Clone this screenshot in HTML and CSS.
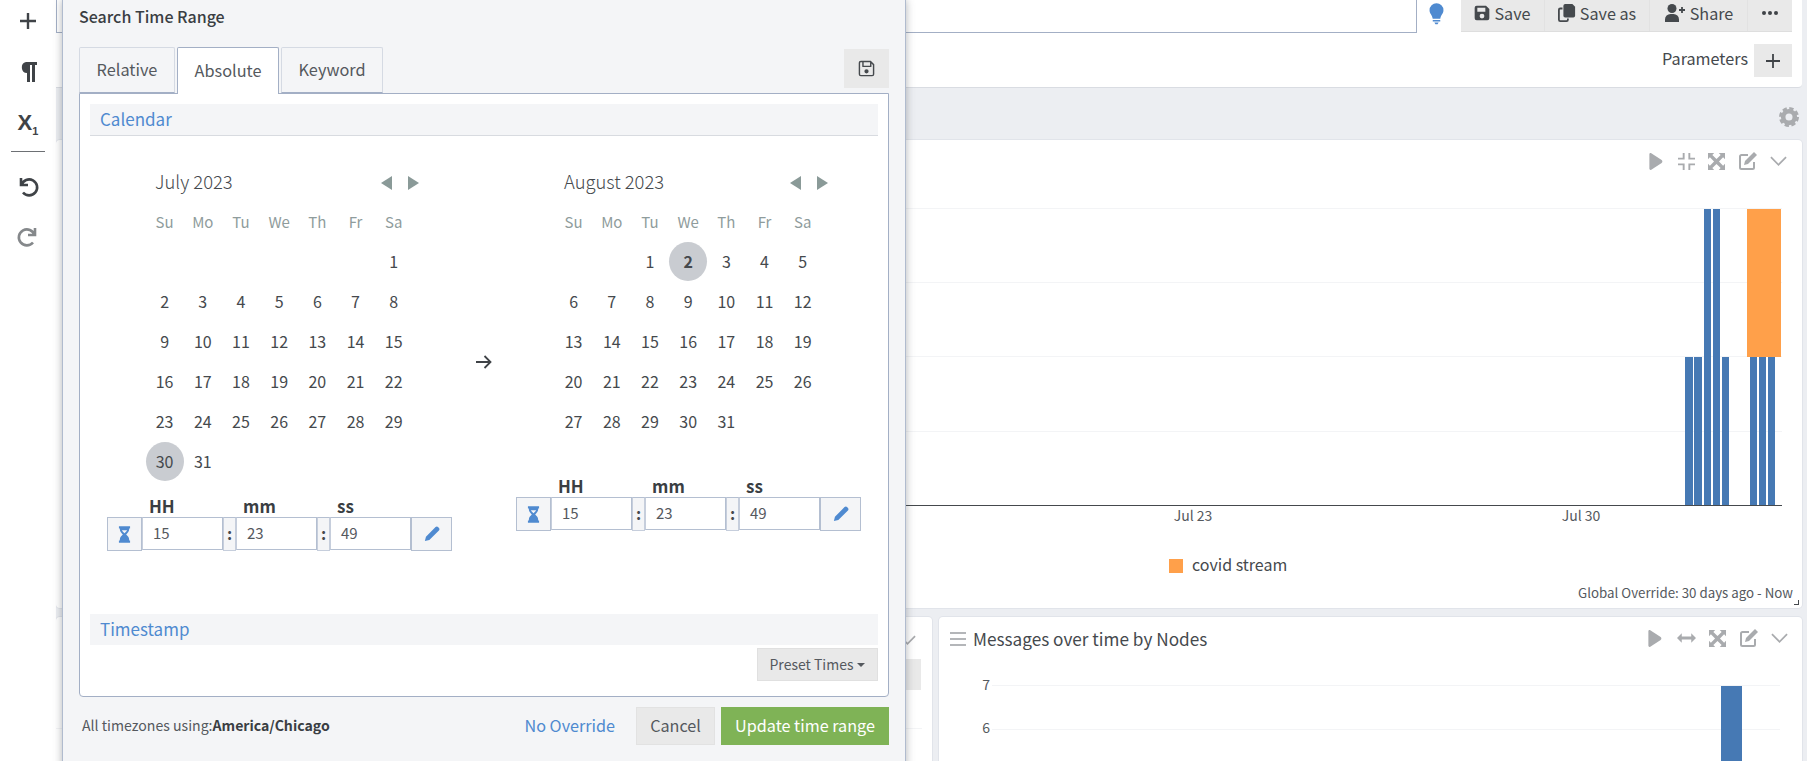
FILE: index.html
```html
<!DOCTYPE html>
<html lang="en">

<head>
    <meta charset="UTF-8">
    <title>Search Time Range</title>
    <link rel="stylesheet" href="styles.css">
</head>

<body>
    <svg class="defs" width="0" height="0">
        <symbol id="i-floppy" viewBox="0 0 24 24">
            <path fill-rule="evenodd" d="M4 1h14l5 5v14a3 3 0 0 1-3 3H4a3 3 0 0 1-3-3V4a3 3 0 0 1 3-3zM5 4v6h12V4zM12 13a3.6 3.6 0 1 0 0 7.200a3.600 3.600 0 0 0 0-7.200z" />
        </symbol>
        <symbol id="i-play" viewBox="0 0 14 18">
            <path d="M0 1.500C0 .3 1 -.3 2 .3l11 7.200c1 .7 1 2.300 0 3L2 17.700c-1 .6-2 0-2-1.200z" />
        </symbol>
        <symbol id="i-expand" viewBox="0 0 18 18">
            <path d="M0 0h6.500L4.600 2 9 6.400 13.400 2l-2-2H18v6.500l-2-1.900L11.600 9l4.400 4.400 2-2V18h-6.600l2-2L9 11.600 4.600 16l1.900 2H0v-6.600l2 2L6.400 9 2 4.600 0 6.500z" />
        </symbol>
        <symbol id="i-edit" viewBox="0 0 20 20">
            <path d="M10 4H3.500A1.500 1.500 0 0 0 2 5.500v11A1.500 1.500 0 0 0 3.500 18h11a1.500 1.500 0 0 0 1.500-1.500V11" fill="none" stroke="currentColor" stroke-width="2" />
            <path d="M16 1l3 3-9 9-4 1 1-4z" />
        </symbol>
        <symbol id="i-chevron" viewBox="0 0 18 10">
            <path d="M1 1l8 8 8-8" fill="none" stroke="currentColor" stroke-width="1.800" />
        </symbol>
        <symbol id="i-hourglass" viewBox="0 0 14 18">
            <path fill-rule="evenodd" d="M1 0h12v2.500h-1v1.500c0 2-2 3.800-3.200 5C10 10.200 12 12 12 14v1.500h1V18H1v-2.500h1V14c0-2 2-3.800 3.200-5C4 7.800 2 6 2 4V2.500H1zM4.200 4.500c.4 1 1.800 2.300 2.800 3.200 1-.9 2.400-2.200 2.800-3.200z" />
        </symbol>
        <symbol id="i-pencil" viewBox="0 0 18 18">
            <path d="M13 1.200c.8-.8 2-.8 2.800 0l1 1c.8.800.8 2 0 2.800L6 15.800 1 17l1.200-5z" />
        </symbol>
    </svg>

    <div class="toolbar">
        <svg class="tool-icon tool-plus" viewBox="0 0 24 24"><path d="M12 4v16M4 12h16" fill="none" stroke="#3f4347" stroke-width="2.400" /></svg>
        <svg class="tool-para" viewBox="0 0 18 20"><path d="M7 0h11v3h-2v17h-3V3h-2v17H8v-9A5.600 5.600 0 0 1 7 0z" fill="#3f4347" /></svg>
        <b class="tool-sub">X<sub>1</sub></b>
        <div class="tool-line"></div>
        <svg class="tool-icon" viewBox="0 0 24 24"><path d="M5 4v7h7M5.500 11A8 8 0 1 1 7 18.500" fill="none" stroke="#3f4347" stroke-width="2.600" /></svg>
        <svg class="tool-icon tool-off" viewBox="0 0 24 24"><path d="M19 4v7h-7M18.500 11A8 8 0 1 0 17 18.500" fill="none" stroke="#85888b" stroke-width="2.600" /></svg>
    </div>

    <div class="main">
        <div class="top-card">
            <div class="top-row">
                <div class="query"></div>
                <svg class="bulb" viewBox="0 0 14 20"><path d="M7 0a6.500 6.500 0 0 1 6.500 6.500c0 3-2.500 4.500-3 8h-7c-.5-3.500-3-5-3-8A6.500 6.500 0 0 1 7 0zM3.500 15.500h7v1.500h-7zM5 18h4l-1 1.500H6z" fill="#4f8ad0" /></svg>
                <div class="btn-group">
                    <span class="top-btn save-btn"><svg class="btn-icon"><use href="#i-floppy" /></svg>Save</span>
                    <span class="top-btn saveas-btn">
                        <svg class="btn-icon btn-icon-big" viewBox="0 0 20 20"><path d="M8 0h8l3 3v10a2 2 0 0 1-2 2H8a2 2 0 0 1-2-2V2a2 2 0 0 1 2-2z" fill="#45494d" /><path d="M5 5H2.500A1.500 1.500 0 0 0 1 6.500v11A1.500 1.500 0 0 0 2.500 19h7a1.500 1.500 0 0 0 1.500-1.500V16" fill="none" stroke="#45494d" stroke-width="2" /></svg>Save as
                    </span>
                    <span class="top-btn share-btn">
                        <svg class="share-icon" viewBox="0 0 22 18"><circle cx="8" cy="4.500" r="4.500" fill="#45494d" /><path d="M1 18v-2.500A5.500 5.500 0 0 1 6.500 10h3a5.500 5.500 0 0 1 5.500 5.500V18z" fill="#45494d" /><path d="M18 3v6M15 6h6" stroke="#45494d" stroke-width="1.800" /></svg>Share
                    </span>
                    <span class="top-btn dots-btn"><i></i><i></i><i></i></span>
                </div>
            </div>
            <div class="param-row">
                <span class="param-label">Parameters</span>
                <span class="param-add"><svg viewBox="0 0 14 14"><path d="M7 0v14M0 7h14" stroke="#3f4347" stroke-width="1.800" /></svg></span>
            </div>
        </div>

        <div class="band">
            <svg class="gear" viewBox="0 0 24 24">
                <circle cx="12" cy="12" r="7" fill="none" stroke="#a9abae" stroke-width="5.500" />
                <circle cx="12" cy="12" r="10.500" fill="none" stroke="#a9abae" stroke-width="3" stroke-dasharray="5.200 3.050" />
            </svg>
        </div>

        <div class="chart-card">
            <div class="card-icons">
                <svg class="ci-play"><use href="#i-play" /></svg>
                <svg class="ci-square" viewBox="0 0 18 18"><path d="M6 0v6H0M12 0v6h6M6 18v-6H0M12 18v-6h6" fill="none" stroke="currentColor" stroke-width="2" /></svg>
                <svg class="ci-square"><use href="#i-expand" /></svg>
                <svg class="ci-edit"><use href="#i-edit" /></svg>
                <svg class="ci-chev"><use href="#i-chevron" /></svg>
            </div>
            <svg class="chart-main" viewBox="56 140 1747 440">
                <g class="grid">
                    <rect x="906" y="208" width="876" height="1" />
                    <rect x="906" y="282" width="876" height="1" />
                    <rect x="906" y="356" width="876" height="1" />
                    <rect x="906" y="431" width="876" height="1" />
                </g>
                <g class="bars">
                    <rect x="1685" y="357" width="8" height="148" />
                    <rect x="1694" y="357" width="8" height="148" />
                    <rect x="1704" y="209" width="7" height="296" />
                    <rect x="1713" y="209" width="7" height="296" />
                    <rect x="1722" y="357" width="7" height="148" />
                    <rect x="1750" y="357" width="7" height="148" />
                    <rect x="1759" y="357" width="7" height="148" />
                    <rect x="1768" y="357" width="7" height="148" />
                </g>
                <rect class="bar-orange" x="1747" y="209" width="34" height="148" />
                <rect class="axis" x="906" y="505" width="876" height="1" />
                <text class="tick" x="1193" y="521" text-anchor="middle">Jul 23</text>
                <text class="tick" x="1581" y="521" text-anchor="middle">Jul 30</text>
                <rect class="bar-orange" x="1169" y="559" width="14" height="14" />
                <text class="legend" x="1192" y="571">covid stream</text>
            </svg>
            <div class="override">Global Override: 30 days ago - Now</div>
            <span class="resize"></span>
        </div>

        <div class="bottom-row">
            <div class="sub-card left-card">
                <svg class="left-chev"><use href="#i-chevron" /></svg>
                <div class="left-btn"></div>
                <div class="left-line"></div>
            </div>
            <div class="sub-card nodes-card">
                <div class="nodes-head">
                    <span class="drag"><i></i><i></i><i></i></span>
                    <span class="nodes-title">Messages over time by Nodes</span>
                    <div class="card-icons nodes-icons">
                        <svg class="ci-play"><use href="#i-play" /></svg>
                        <svg class="ci-wide" viewBox="0 0 20 12"><path d="M0 6l5-5v3.500h10V1l5 5-5 5V7.500H5V11z" /></svg>
                        <svg class="ci-square"><use href="#i-expand" /></svg>
                        <svg class="ci-edit"><use href="#i-edit" /></svg>
                        <svg class="ci-chev"><use href="#i-chevron" /></svg>
                    </div>
                </div>
                <svg class="chart-nodes" viewBox="939 660 863 101">
                    <rect class="grid-line" x="992" y="685" width="788" height="1" />
                    <rect class="grid-line" x="992" y="729" width="788" height="1" />
                    <rect class="bar-blue" x="1721" y="686" width="21" height="75" />
                    <text class="tick" x="990" y="690" text-anchor="end">7</text>
                    <text class="tick" x="990" y="733" text-anchor="end">6</text>
                </svg>
            </div>
        </div>
    </div>

    <div class="modal">
        <div class="modal-title">Search Time Range</div>
        <div class="tabs">
            <span class="tab">Relative</span>
            <span class="tab tab-on">Absolute</span>
            <span class="tab">Keyword</span>
            <span class="tab-save"><svg viewBox="0 0 24 24"><path fill-rule="evenodd" d="M4 1h14l5 5v14a3 3 0 0 1-3 3H4a3 3 0 0 1-3-3V4a3 3 0 0 1 3-3zM4 3a1 1 0 0 0-1 1v16a1 1 0 0 0 1 1h16a1 1 0 0 0 1-1V7l-2-2v4a1 1 0 0 1-1 1H7a1 1 0 0 1-1-1V3zM8 3v5h9V3zM12 13a3 3 0 1 0 0 6 3 3 0 0 0 0-6z" fill="#45494d" /></svg></span>
        </div>

        <div class="panel">
            <div class="sec-head sec-line">Calendar</div>
            <div class="calendars">
                <div class="cal-col">
                    <div class="cal-title"><span class="cal-name">July 2023</span><span class="cal-arrows"><i class="arrow-l"></i><i class="arrow-r"></i></span></div>
                    <div class="cal-grid">
                        <span class="wd">Su</span><span class="wd">Mo</span><span class="wd">Tu</span><span class="wd">We</span><span class="wd">Th</span><span class="wd">Fr</span><span class="wd">Sa</span>
                        <span></span><span></span><span></span><span></span><span></span><span></span><span>1</span>
                        <span>2</span><span>3</span><span>4</span><span>5</span><span>6</span><span>7</span><span>8</span>
                        <span>9</span><span>10</span><span>11</span><span>12</span><span>13</span><span>14</span><span>15</span>
                        <span>16</span><span>17</span><span>18</span><span>19</span><span>20</span><span>21</span><span>22</span>
                        <span>23</span><span>24</span><span>25</span><span>26</span><span>27</span><span>28</span><span>29</span>
                        <span><em class="picked">30</em></span><span>31</span><span></span><span></span><span></span><span></span><span></span>
                    </div>
                    <div class="time-labels"><span>HH</span><span>mm</span><span>ss</span></div>
                    <div class="time-row">
                        <span class="addon addon-l"><svg><use href="#i-hourglass" /></svg></span>
                        <span class="time-input">15</span><span class="colon">:</span>
                        <span class="time-input">23</span><span class="colon">:</span>
                        <span class="time-input">49</span>
                        <span class="addon addon-r"><svg><use href="#i-pencil" /></svg></span>
                    </div>
                </div>
                <div class="cal-to">
                    <svg viewBox="0 0 16 14"><path d="M0 7h14M8.500 1l6 6-6 6" fill="none" stroke="#3f4347" stroke-width="1.800" /></svg>
                </div>
                <div class="cal-col">
                    <div class="cal-title"><span class="cal-name">August 2023</span><span class="cal-arrows"><i class="arrow-l"></i><i class="arrow-r"></i></span></div>
                    <div class="cal-grid">
                        <span class="wd">Su</span><span class="wd">Mo</span><span class="wd">Tu</span><span class="wd">We</span><span class="wd">Th</span><span class="wd">Fr</span><span class="wd">Sa</span>
                        <span></span><span></span><span>1</span><span><em class="picked picked-bold">2</em></span><span>3</span><span>4</span><span>5</span>
                        <span>6</span><span>7</span><span>8</span><span>9</span><span>10</span><span>11</span><span>12</span>
                        <span>13</span><span>14</span><span>15</span><span>16</span><span>17</span><span>18</span><span>19</span>
                        <span>20</span><span>21</span><span>22</span><span>23</span><span>24</span><span>25</span><span>26</span>
                        <span>27</span><span>28</span><span>29</span><span>30</span><span>31</span><span></span><span></span>
                    </div>
                    <div class="time-labels time-labels-short"><span>HH</span><span>mm</span><span>ss</span></div>
                    <div class="time-row">
                        <span class="addon addon-l"><svg><use href="#i-hourglass" /></svg></span>
                        <span class="time-input">15</span><span class="colon">:</span>
                        <span class="time-input">23</span><span class="colon">:</span>
                        <span class="time-input">49</span>
                        <span class="addon addon-r"><svg><use href="#i-pencil" /></svg></span>
                    </div>
                </div>
            </div>
            <div class="sec-head">Timestamp</div>
            <div class="preset-row">
                <span class="preset">Preset Times<i class="caret"></i></span>
            </div>
        </div>

        <div class="modal-foot">
            <span class="tz">All timezones using:<b>America/Chicago</b></span>
            <span class="no-override">No Override</span>
            <span class="foot-btn">Cancel</span>
            <span class="foot-btn foot-go">Update time range</span>
        </div>
    </div>
</body>

</html>
```
FILE: styles.css
```css
html,
body {
    margin: 0;
    padding: 0;
    height: 761px;
    overflow: hidden;
}

body {
    display: flex;
    position: relative;
    background: #eceef2;
    font-family: "Noto Sans CJK SC", "Liberation Sans", sans-serif;
    font-size: 16px;
    color: #45494d;
}

.defs {
    position: absolute;
}

/* left toolbar */
.toolbar {
    width: 56px;
    flex: none;
    background: #fff;
    display: flex;
    flex-direction: column;
    align-items: center;
    padding-top: 9px;
    box-sizing: border-box;
}

.tool-icon {
    width: 24px;
    height: 24px;
    margin-bottom: 26px;
}

.tool-plus {
    margin-bottom: 29px;
}

.tool-para {
    width: 18px;
    height: 20px;
    margin-bottom: 27px;
}

.tool-sub {
    font-family: "Liberation Sans", sans-serif;
    font-size: 22px;
    line-height: 28px;
    height: 28px;
    color: #3f4347;
}

.tool-sub sub {
    font-size: 11px;
    line-height: 0;
}

.tool-line {
    width: 34px;
    height: 1px;
    background: #6d7074;
    margin: 14px 0 22px;
}

.tool-icon:last-child {
    margin-bottom: 0;
}

/* page behind the dialog */
.main {
    flex: 1;
    min-width: 0;
    height: 761px;
    overflow: hidden;
    padding-right: 5px;
}

.top-card {
    height: 87px;
    background: #fff;
    border-bottom: 1px solid #d9dce2;
    border-radius: 0 0 4px 0;
    box-sizing: content-box;
}

.top-row {
    display: flex;
    height: 33px;
}

.query {
    flex: 1;
    border: 1px solid #a3afc5;
    border-top: 0;
}

.bulb {
    width: 15px;
    height: 22px;
    margin: 3px 17px 0 12px;
}

.btn-group {
    display: flex;
    align-self: flex-start;
    margin-right: 10px;
    background: #e9e9e9;
    border-bottom: 1px solid #dedede;
}

.top-btn {
    display: flex;
    align-items: center;
    justify-content: center;
    font-size: 16.200px;
    border-right: 1px solid #e2e2e2;
    box-sizing: border-box;
    height: 31px;
    padding-bottom: 5px;
    gap: 4px;
}

.top-btn:last-child {
    border-right: 0;
}

.save-btn {
    width: 84px;
}

.saveas-btn {
    width: 105px;
}

.share-btn {
    width: 98px;
}

.dots-btn {
    width: 44px;
    gap: 2px;
}

.dots-btn i {
    width: 4px;
    height: 4px;
    border-radius: 50%;
    background: #3f4347;
}

.btn-icon {
    width: 16px;
    height: 16px;
    fill: #45494d;
}

.btn-icon-big {
    width: 18px;
    height: 18px;
}

.share-icon {
    width: 22px;
    height: 18px;
}

.param-row {
    display: flex;
    justify-content: flex-end;
    align-items: center;
    gap: 6px;
    padding: 11px 10px 0 0;
}

.param-label {
    font-size: 16.200px;
    padding-bottom: 6px;
}

.param-add {
    width: 38px;
    height: 33px;
    background: #e9e9e9;
    display: flex;
    align-items: center;
    justify-content: center;
}

.param-add svg {
    width: 14px;
    height: 14px;
}

.band {
    height: 52px;
    display: flex;
    justify-content: flex-end;
    align-items: flex-start;
}

.gear {
    width: 20px;
    height: 20px;
    margin: 19px 3px 0 0;
}

.chart-card {
    position: relative;
    height: 468px;
    box-sizing: border-box;
    background: #fff;
    border-radius: 4px;
    box-shadow: 0 0 0 1px #e1e4ea;
    margin-bottom: 9px;
}

.card-icons {
    display: flex;
    align-items: center;
    justify-content: flex-end;
    color: #a9abae;
    fill: #a9abae;
    position: absolute;
    top: 11px;
    right: 15px;
    height: 20px;
}

.ci-play {
    width: 14px;
    height: 17px;
    margin-right: 15px;
}

.ci-square {
    width: 17px;
    height: 17px;
    margin-right: 13px;
}

.ci-wide {
    width: 19px;
    height: 12px;
    margin-right: 13px;
}

.ci-edit {
    width: 20px;
    height: 20px;
    margin-right: 12px;
}

.ci-chev {
    width: 17px;
    height: 10px;
}

.chart-main {
    display: block;
    width: 1747px;
    height: 440px;
}

.grid rect,
.grid-line {
    fill: #f3f4f6;
}

.bars rect,
.bar-blue {
    fill: #4679b4;
}

.bar-orange {
    fill: #ffa04a;
}

.axis {
    fill: #45494d;
}

.tick {
    font-size: 14px;
    fill: #55595e;
}

.legend {
    font-size: 16px;
    fill: #45494d;
}

.override {
    position: absolute;
    right: 9px;
    bottom: 6px;
    font-size: 13.300px;
    color: #55595e;
    line-height: 18px;
}

.resize {
    position: absolute;
    right: 3px;
    bottom: 3px;
    width: 4px;
    height: 4px;
    border-right: 1px solid #45494d;
    border-bottom: 1px solid #45494d;
}

.bottom-row {
    display: flex;
    gap: 7px;
}

.sub-card {
    background: #fff;
    border-radius: 4px 4px 0 0;
    box-shadow: 0 0 0 1px #e1e4ea;
    height: 144px;
    position: relative;
}

.left-card {
    width: 876px;
    flex: none;
}

.left-chev {
    position: absolute;
    right: 16px;
    top: 18px;
    width: 17px;
    height: 10px;
    color: #a9abae;
}

.left-btn {
    position: absolute;
    right: 11px;
    top: 42px;
    width: 40px;
    height: 31px;
    background: #e9e9e9;
}

.left-line {
    position: absolute;
    right: 10px;
    left: 0;
    top: 111px;
    height: 1px;
    background: #f3f4f6;
}

.nodes-card {
    flex: 1;
}

.nodes-head {
    display: flex;
    align-items: center;
    height: 43px;
    padding-left: 11px;
}

.drag {
    display: flex;
    flex-direction: column;
    gap: 4px;
    width: 16px;
    margin-right: 7px;
}

.drag i {
    height: 2px;
    background: #b4b6b9;
}

.nodes-title {
    font-size: 17.200px;
}

.nodes-icons {
    top: 11px;
    right: 14px;
}

.chart-nodes {
    position: absolute;
    left: 0;
    top: 43px;
    width: 863px;
    height: 101px;
}

/* search time range dialog */
.modal {
    position: absolute;
    left: 62px;
    top: 0;
    width: 844px;
    height: 780px;
    box-sizing: border-box;
    padding: 0 16px;
    background: #f4f5f7;
    border-left: 1px solid #b0bbce;
    border-right: 1px solid #b0bbce;
    box-shadow: 0 0 8px rgba(70, 74, 82, .42);
}

.modal-title {
    font-size: 16px;
    font-weight: 500;
    line-height: 24px;
    padding-top: 4px;
    margin-bottom: 19px;
    color: #3a3e43;
}

.tabs {
    display: flex;
    gap: 2px;
    height: 46px;
    align-items: flex-start;
}

.tab {
    width: 96px;
    height: 46px;
    box-sizing: border-box;
    border: 1px solid #d5dae3;
    border-bottom: 1px solid #a3afc5;
    border-radius: 2px 2px 0 0;
    display: flex;
    align-items: center;
    justify-content: center;
    font-size: 16.300px;
    padding-bottom: 2px;
    color: #55595e;
}

.tab-on {
    width: 102px;
    height: 47px;
    position: relative;
    z-index: 1;
    background: #fff;
    border-color: #a3afc5;
    border-bottom: 0;
    padding-bottom: 3px;
}

.tab:nth-child(3) {
    width: 102px;
}

.tab-save {
    margin: 2px 0 0 auto;
    width: 45px;
    height: 39px;
    background: #e9e9e9;
    display: flex;
    align-items: center;
    justify-content: center;
}

.tab-save svg {
    width: 17px;
    height: 17px;
}

.panel {
    height: 604px;
    box-sizing: border-box;
    background: #fff;
    border: 1px solid #a3afc5;
    border-radius: 0 0 4px 4px;
    padding: 10px 10px 0;
}

.sec-head {
    height: 31px;
    line-height: 29px;
    background: #f4f5f7;
    padding-left: 10px;
    font-size: 17px;
    color: #4f8ad0;
}

.sec-line {
    height: 32px;
    box-sizing: border-box;
    border-bottom: 1px solid #d8dbe0;
}

.calendars {
    display: flex;
    align-items: flex-start;
    padding-left: 17px;
    height: 478px;
    box-sizing: border-box;
}

.cal-col {
    width: 345px;
    flex: none;
    padding-top: 32px;
}

.cal-title {
    display: flex;
    justify-content: space-between;
    align-items: center;
    height: 30px;
    margin-bottom: 3px;
    padding: 0 33px 0 48px;
    color: #45494d;
}

.cal-name {
    font-size: 18.400px;
    font-weight: 300;
    padding-bottom: 4px;
}

.cal-arrows {
    display: flex;
    gap: 16px;
}

.arrow-l,
.arrow-r {
    width: 0;
    height: 0;
    border-top: 7px solid transparent;
    border-bottom: 7px solid transparent;
}

.arrow-l {
    border-right: 11px solid #8a9a98;
}

.arrow-r {
    border-left: 11px solid #8a9a98;
}

.cal-grid {
    display: grid;
    grid-template-columns: repeat(7, 38.200px);
    grid-auto-rows: 40px;
    margin-left: 38.500px;
    font-size: 16px;
    color: #45494d;
}

.cal-grid span {
    display: flex;
    align-items: center;
    justify-content: center;
}

.cal-grid .wd {
    color: #8f9c9c;
    font-size: 15px;
}

.picked {
    width: 39px;
    height: 39px;
    border-radius: 50%;
    background: #c9ccd1;
    display: flex;
    align-items: center;
    justify-content: center;
    font-style: normal;
}

.picked-bold {
    font-weight: 700;
}

.time-labels {
    display: flex;
    margin-top: 15px;
    height: 21px;
    line-height: 19px;
    padding-left: 42px;
    font-size: 17px;
    font-weight: 700;
    color: #3a3e43;
}

.time-labels span {
    width: 94px;
}

.time-labels-short {
    margin-top: 35px;
}

.time-row {
    display: flex;
    height: 34px;
}

.addon {
    box-sizing: border-box;
    height: 34px;
    background: #f4f5f7;
    border: 1px solid #b4bfd1;
    display: flex;
    align-items: center;
    justify-content: center;
    color: #4f8ad0;
    fill: #4f8ad0;
}

.addon-l {
    width: 35px;
}

.addon-l svg {
    width: 13px;
    height: 17px;
}

.addon-r {
    width: 41px;
}

.addon-r svg {
    width: 16px;
    height: 16px;
}

.time-input {
    box-sizing: border-box;
    width: 81px;
    height: 33px;
    line-height: 29px;
    border: 1px solid #b4bfd1;
    border-left: 1px solid #c6cedc;
    padding-left: 10px;
    font-size: 15px;
    color: #55595e;
    background: #fff;
}

.colon {
    box-sizing: border-box;
    width: 13px;
    height: 34px;
    line-height: 30px;
    text-align: center;
    background: #f4f5f7;
    border: 1px solid #c6cedc;
    border-top: 1px solid #b4bfd1;
    font-weight: 700;
}

.cal-to {
    width: 64px;
    flex: none;
    padding-top: 214px;
    text-align: center;
}

.cal-to svg {
    width: 16px;
    height: 14px;
}

.preset-row {
    display: flex;
    justify-content: flex-end;
    margin-top: 3px;
}

.preset {
    width: 121px;
    height: 33px;
    box-sizing: border-box;
    background: #e9e9e9;
    border: 1px solid #e0e0e0;
    display: flex;
    align-items: center;
    justify-content: center;
    font-size: 14px;
    padding-bottom: 2px;
    color: #55595e;
    gap: 4px;
}

.caret {
    border-left: 4px solid transparent;
    border-right: 4px solid transparent;
    border-top: 4px solid #55595e;
    margin-top: 2px;
}

.modal-foot {
    display: flex;
    align-items: center;
    margin-top: 10px;
    height: 38px;
}

.tz {
    font-size: 14.100px;
    margin-left: 3px;
    padding-bottom: 3px;
    color: #55595e;
    flex: 1;
}

.tz b {
    color: #3a3e43;
}

.no-override {
    font-size: 16.200px;
    color: #4f8ad0;
    margin-right: 21px;
    padding-bottom: 3px;
}

.foot-btn {
    height: 38px;
    width: 79px;
    box-sizing: border-box;
    background: #e9e9e9;
    border: 1px solid #e2e2e2;
    display: flex;
    align-items: center;
    justify-content: center;
    font-size: 16.200px;
    padding-bottom: 3px;
    color: #55595e;
}

.foot-go {
    width: 168px;
    margin-left: 6px;
    background: #7fb356;
    border-color: #7fb356;
    color: #fff;
}
```
